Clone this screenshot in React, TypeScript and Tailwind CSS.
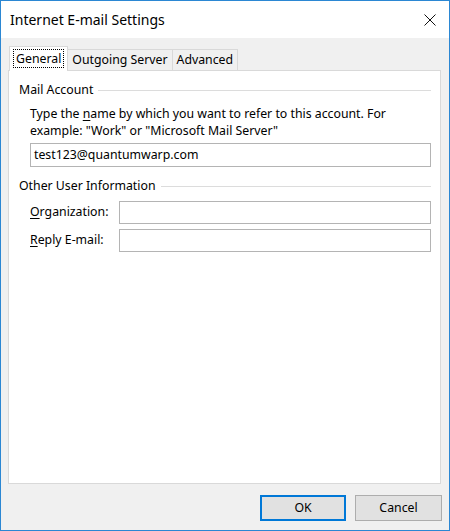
const font = { fontFamily: "'Noto Sans', 'Open Sans', sans-serif" };

function GroupHeader({ label }: { label: string }) {
  return (
    <div className="flex items-center gap-[5px] h-[16px]">
      <span className="whitespace-nowrap">{label}</span>
      <div className="flex-1 h-px bg-[#dcdcdc]" />
    </div>
  );
}

function Field({ underline, rest }: { underline: string; rest: string }) {
  return (
    <div className="flex items-center h-[23px]">
      <label className="w-[89px] whitespace-nowrap">
        <span className="underline underline-offset-2">{underline}</span>
        {rest}
      </label>
      <div className="flex-1 h-full border border-[#b4b4b4] bg-white" />
    </div>
  );
}

export default function App() {
  return (
    <div
      className="w-[450px] h-[531px] flex flex-col bg-[#f0f0f0] border border-t-0 border-[#2b87d3] text-[12.3px] text-black"
      style={font}
    >
      <div className="h-[38px] bg-white flex items-center justify-between pl-[9px] pr-[13px] border-t border-[#2b87d3]">
        <span className="text-[14px]">Internet E-mail Settings</span>
        <svg width="12" height="12" viewBox="0 0 12 12" className="mt-[1px]">
          <path d="M0.5 0.5 L11.5 11.5 M11.5 0.5 L0.5 11.5" stroke="#111" strokeWidth="1" />
        </svg>
      </div>

      <div className="flex-1 flex flex-col px-[7px] pt-[8px]">
        <div className="flex items-end pl-[1px] h-[24px] relative z-10">
          <div className="h-[25px] -mb-px bg-white border border-b-0 border-[#d9d9d9] px-[3px] pt-[2px] flex items-start">
            <span className="border border-dotted border-black px-[2px] leading-[17px]">General</span>
          </div>
          <div className="h-[21px] border border-l-0 border-b-0 border-[#d9d9d9] px-[4px] flex items-center">
            Outgoing Server
          </div>
          <div className="h-[21px] border border-l-0 border-b-0 border-[#d9d9d9] px-[4px] flex items-center">
            Advanced
          </div>
        </div>

        <div className="w-[433px] h-[414px] bg-white border border-[#d9d9d9] pt-[11px] pl-[10px] pr-[9px]">
          <GroupHeader label="Mail Account" />
          <div className="pl-[11px] mt-[7px]">
            <p className="leading-[17px]">
              Type the <span className="underline underline-offset-2">n</span>ame by which you want to refer to this
              account. For example: "Work" or "Microsoft Mail Server"
            </p>
            <div className="mt-[4px] h-[24px] border border-[#b4b4b4] flex items-center px-[3px]">
              test123@quantumwarp.com
            </div>
          </div>

          <div className="mt-[11px]">
            <GroupHeader label="Other User Information" />
          </div>
          <div className="pl-[11px] mt-[7px] flex flex-col gap-[5px]">
            <Field underline="O" rest="rganization:" />
            <Field underline="R" rest="eply E-mail:" />
          </div>
        </div>

        <div className="flex justify-end gap-[9px] mt-[11px]">
          <button className="w-[86px] h-[26px] border-2 border-[#0078d7] bg-[#e1e1e1]">OK</button>
          <button className="w-[87px] h-[26px] border border-[#adadad] bg-[#e1e1e1]">Cancel</button>
        </div>
      </div>
    </div>
  );
}
